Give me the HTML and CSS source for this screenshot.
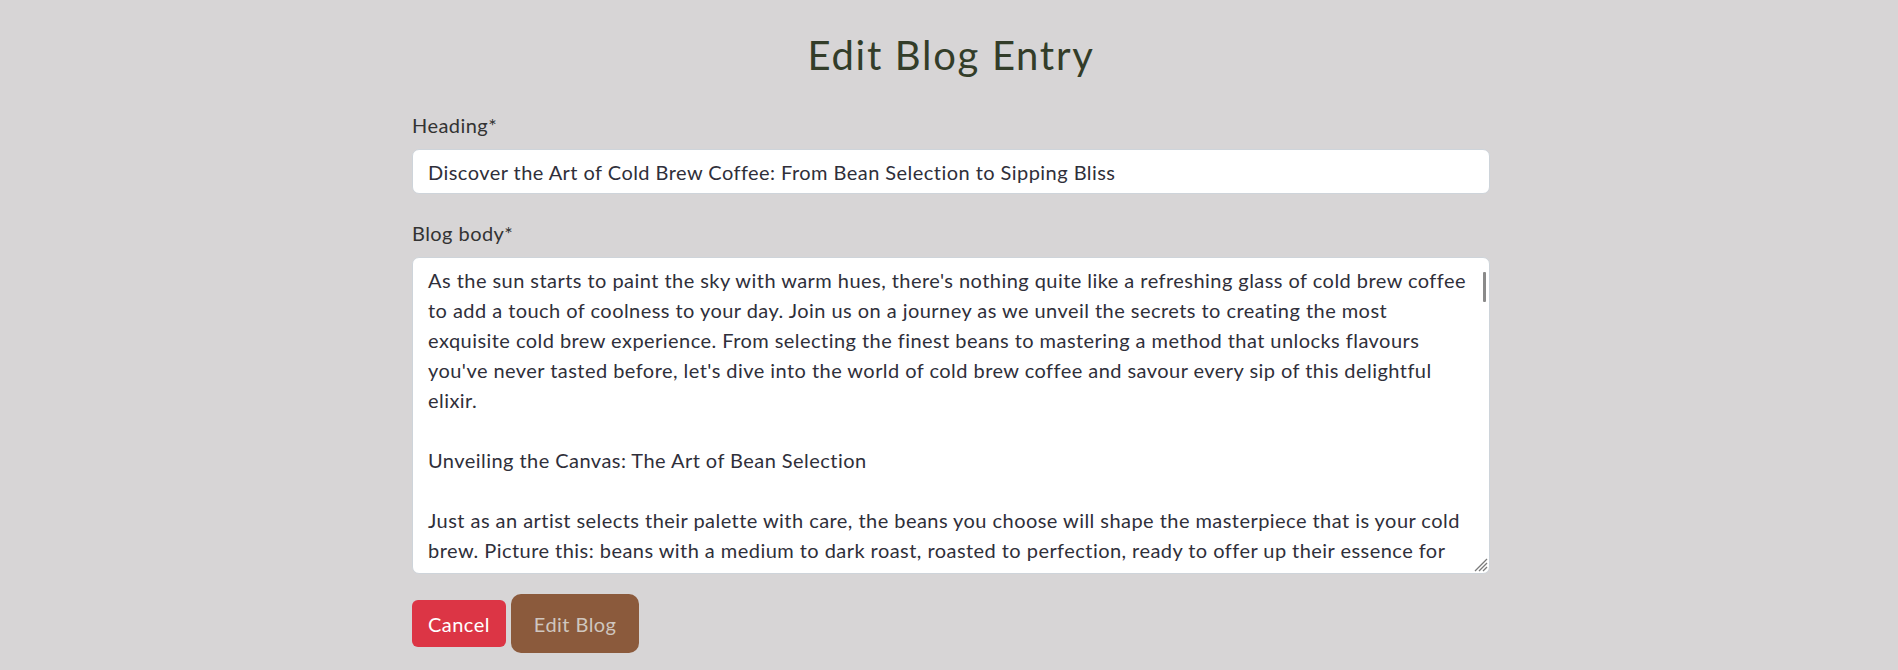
FILE: index.html
```html
<!DOCTYPE html>
<html lang="en">
<head>
<meta charset="utf-8">
<title>Edit Blog Entry</title>
<link rel="stylesheet" href="styles.css">
</head>
<body>
<main class="page">
  <h1 class="title">Edit Blog Entry</h1>
  <form class="blog-form">
    <div class="field">
      <label class="field-label" for="heading">Heading*</label>
      <input class="field-input" id="heading" type="text" value="Discover the Art of Cold Brew Coffee: From Bean Selection to Sipping Bliss">
    </div>
    <div class="field">
      <label class="field-label" for="body">Blog body*</label>
      <div class="area-wrap">
        <textarea class="field-area" id="body" wrap="off">As the sun starts to paint the sky with warm hues, there's nothing quite like a refreshing glass of cold brew coffee
to add a touch of coolness to your day. Join us on a journey as we unveil the secrets to creating the most
exquisite cold brew experience. From selecting the finest beans to mastering a method that unlocks flavours
you've never tasted before, let's dive into the world of cold brew coffee and savour every sip of this delightful
elixir.

Unveiling the Canvas: The Art of Bean Selection

Just as an artist selects their palette with care, the beans you choose will shape the masterpiece that is your cold
brew. Picture this: beans with a medium to dark roast, roasted to perfection, ready to offer up their essence for</textarea>
        <span class="scroll-thumb"></span>
        <svg class="grip" width="16" height="16" viewBox="0 0 16 16" aria-hidden="true">
          <path d="M15 3 L3 15 M15 7 L7 15 M15 11 L11 15" stroke="#7a7a7a" stroke-width="1.3" fill="none"/>
        </svg>
      </div>
    </div>
    <div class="actions">
      <a class="btn btn-cancel" href="#">Cancel</a>
      <button class="btn btn-submit" type="button">Edit Blog</button>
    </div>
  </form>
</main>
</body>
</html>
```

FILE: styles.css
```css
html, body {
  margin: 0;
  padding: 0;
}
body {
  background: #d7d5d6;
  font-family: "Lato", "Noto Sans", sans-serif;
  color: #333333;
  font-size: 20px;
  letter-spacing: 0.45px;
}
.page {
  width: 1078px;
  margin-left: calc(50% - 537px);
  display: flex;
  flex-direction: column;
}
.title {
  margin: 31px 0 0;
  font-size: 40px;
  font-weight: 400;
  line-height: 48px;
  letter-spacing: 1.7px;
  text-align: center;
  color: #333d29;
}
.blog-form {
  display: flex;
  flex-direction: column;
  margin-top: 31px;
}
.field {
  display: flex;
  flex-direction: column;
  margin-bottom: 24px;
}
.field-label {
  font-size: 20px;
  line-height: 30px;
  margin-bottom: 9px;
  color: #333333;
}
.field-input {
  box-sizing: border-box;
  height: 45px;
  padding: 7px 15px;
  border: 1px solid #ced4da;
  border-radius: 7px;
  background: #ffffff;
  font-family: inherit;
  font-size: 20px;
  line-height: 29px;
  letter-spacing: inherit;
  color: #2f2f3a;
  outline: none;
}
.area-wrap {
  position: relative;
  display: flex;
}
.field-area {
  flex: 1;
  box-sizing: border-box;
  height: 317px;
  padding: 7px 15px;
  border: 1px solid #ced4da;
  border-radius: 7px;
  background: #ffffff;
  font-family: inherit;
  font-size: 20px;
  line-height: 30px;
  letter-spacing: inherit;
  color: #2f2f3a;
  white-space: pre;
  overflow: hidden;
  resize: none;
  outline: none;
}
.scroll-thumb {
  position: absolute;
  right: 4px;
  top: 15px;
  width: 3px;
  height: 30px;
  background: #8a8a8a;
  border-radius: 1px;
}
.grip {
  position: absolute;
  right: 2px;
  bottom: 2px;
  pointer-events: none;
}
.actions {
  display: flex;
  align-items: center;
  gap: 5px;
  margin-top: -4px;
}
.btn {
  box-sizing: border-box;
  display: inline-flex;
  align-items: center;
  justify-content: center;
  border: 1px solid transparent;
  font-family: inherit;
  font-size: 20px;
  line-height: 30px;
  letter-spacing: inherit;
  text-decoration: none;
  cursor: pointer;
}
.btn-cancel {
  height: 47px;
  padding: 7px 15px;
  background: #dc3545;
  color: #ffffff;
  border-radius: 6px;
}
.btn-submit {
  height: 59px;
  padding: 13px 22px;
  background: #8b5a3c;
  color: #cfc6bf;
  border-radius: 10px;
}
```
